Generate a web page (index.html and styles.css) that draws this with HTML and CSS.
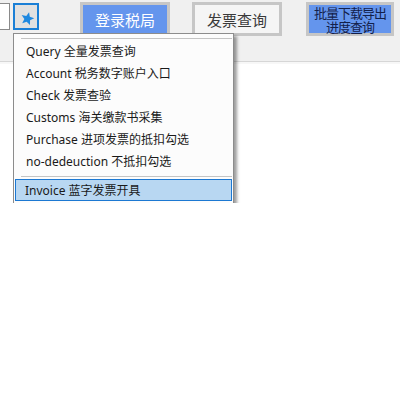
FILE: index.html
```html
<!DOCTYPE html>
<html>
<head>
<meta charset="utf-8">
<link rel="stylesheet" href="styles.css">
</head>
<body>
<div class="page">
  <div class="toolbar">
    <div class="field"></div>
    <div class="star-btn">
      <svg class="star" width="15" height="15" viewBox="0 0 24 24"><polygon transform="rotate(14 12 12)" points="12,1.5 14.9,8.4 22.4,9 16.7,13.9 18.4,21.3 12,17.4 5.6,21.3 7.3,13.9 1.6,9 9.1,8.4" fill="#1e88e0"/></svg>
    </div>
    <div class="btn btn-blue btn-login">登录税局</div>
    <div class="btn btn-light">发票查询</div>
    <div class="btn btn-blue btn-batch">批量下载导出<br>进度查询</div>
  </div>
  <div class="band"></div>

  <div class="menu-clip">
    <div class="menu">
      <div class="sep sep-top"></div>
      <div class="item">Query 全量发票查询</div>
      <div class="item">Account 税务数字账户入口</div>
      <div class="item">Check 发票查验</div>
      <div class="item">Customs 海关缴款书采集</div>
      <div class="item">Purchase 进项发票的抵扣勾选</div>
      <div class="item">no-dedeuction 不抵扣勾选</div>
      <div class="sep sep-mid"></div>
      <div class="item item-active">Invoice 蓝字发票开具</div>
    </div>
  </div>
</div>
</body>
</html>
```

FILE: styles.css
```css
html, body {
  margin: 0;
  padding: 0;
  background: #ffffff;
}

.page {
  position: relative;
  width: 400px;
  height: 400px;
  overflow: hidden;
  font-family: "Noto Sans", "Noto Sans CJK SC", sans-serif;
}

.toolbar {
  display: flex;
  align-items: flex-start;
  height: 62px;
  padding-top: 2px;
  box-sizing: border-box;
  background: #f0f0f0;
  border-bottom: 1px solid #d6d6d6;
}

.field {
  width: 20px;
  height: 27px;
  margin-top: 1px;
  margin-left: -10px;
  box-sizing: border-box;
  background: #ffffff;
  border: 1px solid #8a8a8a;
}

.star-btn {
  width: 26px;
  height: 27px;
  margin-top: 1px;
  margin-left: 3px;
  box-sizing: border-box;
  border: 2px solid #1a7fd6;
  background: #e1e1e1;
  display: flex;
  align-items: center;
  justify-content: center;
}

.star {
  display: block;
  margin: 3px 0 0 2px;
}

.btn {
  height: 34px;
  width: 90px;
  box-sizing: border-box;
  border: 3px solid #c6c6c6;
  display: flex;
  align-items: center;
  justify-content: center;
  text-align: center;
  font-family: "Noto Sans CJK SC", sans-serif;
}

.btn-blue {
  background: #6495ed;
}

.btn-login {
  margin-left: 41px;
  color: #ffffff;
  font-size: 15px;
}

.btn-light {
  margin-left: 22px;
  background: #f5f5f5;
  color: #3a3a3a;
  font-size: 15px;
}

.btn-batch {
  margin-left: 24px;
  width: 88px;
  color: #13204a;
  font-size: 13px;
  letter-spacing: -1px;
  line-height: 14px;
  padding-top: 1px;
}

.band {
  height: 2px;
  background: #f7f7f7;
}

.menu-clip {
  position: absolute;
  left: 13px;
  top: 33px;
  width: 230px;
  height: 170px;
  overflow: hidden;
}

.menu {
  width: 221px;
  box-sizing: border-box;
  background: #fcfcfc;
  border: 1px solid #8c8c8c;
  box-shadow: 3px 3px 3px rgba(0, 0, 0, 0.38);
  padding: 0 1px 40px 0;
}

.sep {
  height: 1px;
  background: #c4c4c4;
  margin-left: 7px;
}

.sep-top {
  margin-top: 4px;
  margin-bottom: 1px;
}

.sep-mid {
  margin-top: 4px;
  margin-bottom: 2px;
}

.item {
  height: 22px;
  line-height: 21px;
  padding-left: 10px;
  font-size: 12px;
  color: #1a1a1a;
  white-space: nowrap;
  box-sizing: border-box;
  border: 1px solid transparent;
  margin-left: 1px;
}

.item-active {
  background: #b8d7f2;
  border-color: #1c78d2;
  padding-left: 9px;
}
```
